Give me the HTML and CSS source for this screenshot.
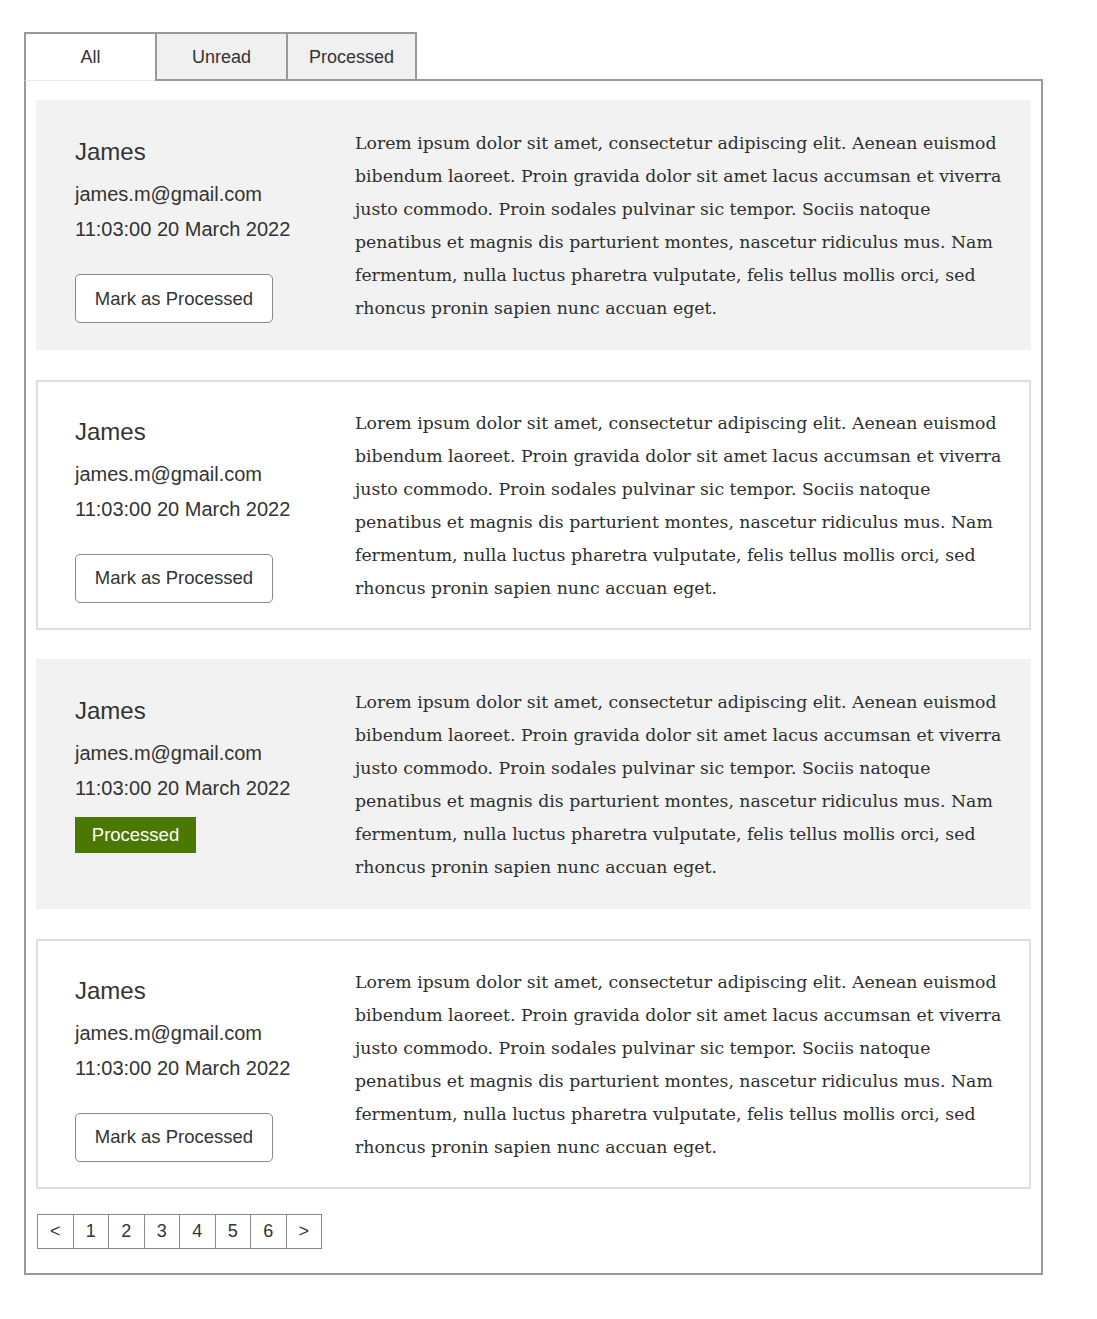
FILE: index.html
```html
<!DOCTYPE html>
<html>
<head>
<meta charset="utf-8">
<link rel="stylesheet" href="styles.css">
</head>
<body>
<div class="wrap">
  <div class="tabs">
    <div class="tab active">All</div>
    <div class="tab">Unread</div>
    <div class="tab">Processed</div>
    <div class="tab-fill"></div>
  </div>
  <div class="panel">
    <div class="card shaded">
      <div class="meta">
        <div class="name">James</div>
        <div class="email">james.m@gmail.com</div>
        <div class="date">11:03:00 20 March 2022</div>
        <button class="btn">Mark as Processed</button>
      </div>
      <p class="msg">Lorem ipsum dolor sit amet, consectetur adipiscing elit. Aenean euismod<br>bibendum laoreet. Proin gravida dolor sit amet lacus accumsan et viverra<br>justo commodo. Proin sodales pulvinar sic tempor. Sociis natoque<br>penatibus et magnis dis parturient montes, nascetur ridiculus mus. Nam<br>fermentum, nulla luctus pharetra vulputate, felis tellus mollis orci, sed<br>rhoncus pronin sapien nunc accuan eget.</p>
    </div>
    <div class="card outlined">
      <div class="meta">
        <div class="name">James</div>
        <div class="email">james.m@gmail.com</div>
        <div class="date">11:03:00 20 March 2022</div>
        <button class="btn">Mark as Processed</button>
      </div>
      <p class="msg">Lorem ipsum dolor sit amet, consectetur adipiscing elit. Aenean euismod<br>bibendum laoreet. Proin gravida dolor sit amet lacus accumsan et viverra<br>justo commodo. Proin sodales pulvinar sic tempor. Sociis natoque<br>penatibus et magnis dis parturient montes, nascetur ridiculus mus. Nam<br>fermentum, nulla luctus pharetra vulputate, felis tellus mollis orci, sed<br>rhoncus pronin sapien nunc accuan eget.</p>
    </div>
    <div class="card shaded">
      <div class="meta">
        <div class="name">James</div>
        <div class="email">james.m@gmail.com</div>
        <div class="date">11:03:00 20 March 2022</div>
        <span class="badge">Processed</span>
      </div>
      <p class="msg">Lorem ipsum dolor sit amet, consectetur adipiscing elit. Aenean euismod<br>bibendum laoreet. Proin gravida dolor sit amet lacus accumsan et viverra<br>justo commodo. Proin sodales pulvinar sic tempor. Sociis natoque<br>penatibus et magnis dis parturient montes, nascetur ridiculus mus. Nam<br>fermentum, nulla luctus pharetra vulputate, felis tellus mollis orci, sed<br>rhoncus pronin sapien nunc accuan eget.</p>
    </div>
    <div class="card outlined">
      <div class="meta">
        <div class="name">James</div>
        <div class="email">james.m@gmail.com</div>
        <div class="date">11:03:00 20 March 2022</div>
        <button class="btn">Mark as Processed</button>
      </div>
      <p class="msg">Lorem ipsum dolor sit amet, consectetur adipiscing elit. Aenean euismod<br>bibendum laoreet. Proin gravida dolor sit amet lacus accumsan et viverra<br>justo commodo. Proin sodales pulvinar sic tempor. Sociis natoque<br>penatibus et magnis dis parturient montes, nascetur ridiculus mus. Nam<br>fermentum, nulla luctus pharetra vulputate, felis tellus mollis orci, sed<br>rhoncus pronin sapien nunc accuan eget.</p>
    </div>
    <div class="pager">
      <span class="page">&lt;</span>
      <span class="page">1</span>
      <span class="page">2</span>
      <span class="page">3</span>
      <span class="page">4</span>
      <span class="page">5</span>
      <span class="page">6</span>
      <span class="page">&gt;</span>
    </div>
  </div>
</div>
</body>
</html>
```
FILE: styles.css
```css
html, body {
  margin: 0;
  padding: 0;
  background: #fff;
}
body {
  font-family: "Liberation Sans", Arial, sans-serif;
  color: #333;
}
.wrap {
  padding: 32px 0 0 24px;
  width: 1019px;
}
.tabs {
  display: flex;
  height: 49px;
}
.tab {
  box-sizing: border-box;
  width: 131px;
  height: 49px;
  display: flex;
  align-items: center;
  justify-content: center;
  font-size: 18px;
  color: #333;
  background: #f0f0f0;
  border-top: 2px solid #999;
  border-left: 2px solid #999;
  border-bottom: 2px solid #999;
  padding-top: 1px;
}
.tab:nth-child(3) {
  border-right: 2px solid #999;
}
.tab.active {
  background: #fff;
  border-bottom: 1px solid #e8e8e8;
}
.tab-fill {
  flex: 1;
  border-bottom: 2px solid #999;
}
.panel {
  border: 2px solid #999;
  border-top: none;
  padding: 19px 10px 24px 10px;
  display: flex;
  flex-direction: column;
  gap: 29.67px;
}
.card {
  box-sizing: border-box;
  height: 250px;
  display: flex;
  padding: 27px 20px 0 39px;
}
.shaded {
  background: #f2f2f2;
}
.outlined {
  border: 2px solid #dedede;
  padding: 25px 18px 0 37px;
}
.meta {
  width: 280px;
  flex: none;
  padding-top: 10px;
  display: flex;
  flex-direction: column;
  align-items: flex-start;
}
.name {
  font-size: 24px;
  line-height: 30px;
  color: #333;
}
.email {
  font-size: 20px;
  line-height: 24px;
  margin-top: 15px;
}
.date {
  font-size: 20px;
  line-height: 24px;
  margin-top: 11px;
}
.btn {
  margin-top: 33px;
  box-sizing: border-box;
  width: 198px;
  height: 49px;
  background: #fff;
  border: 1.5px solid #8a8a8a;
  border-radius: 5px;
  font-family: "Liberation Sans", Arial, sans-serif;
  font-size: 18.5px;
  color: #333;
  padding: 0;
}
.badge {
  margin-top: 17px;
  box-sizing: border-box;
  width: 121px;
  height: 36px;
  background: #4a7800;
  color: #fff;
  font-size: 18.5px;
  display: flex;
  align-items: center;
  justify-content: center;
}
.msg {
  margin: 0;
  font-family: "DejaVu Serif", Georgia, serif;
  font-size: 17.3px;
  line-height: 33px;
  color: #2e2e2e;
  white-space: nowrap;
}
.pager {
  display: flex;
  margin-left: 1px;
  margin-top: -5px;
}
.page {
  box-sizing: border-box;
  width: 35.5px;
  height: 35px;
  border: 1px solid #8a8a8a;
  border-right: none;
  display: flex;
  align-items: center;
  justify-content: center;
  font-size: 18px;
  color: #333;
}
.page:last-child {
  border-right: 1px solid #8a8a8a;
  width: 36.5px;
}
```
